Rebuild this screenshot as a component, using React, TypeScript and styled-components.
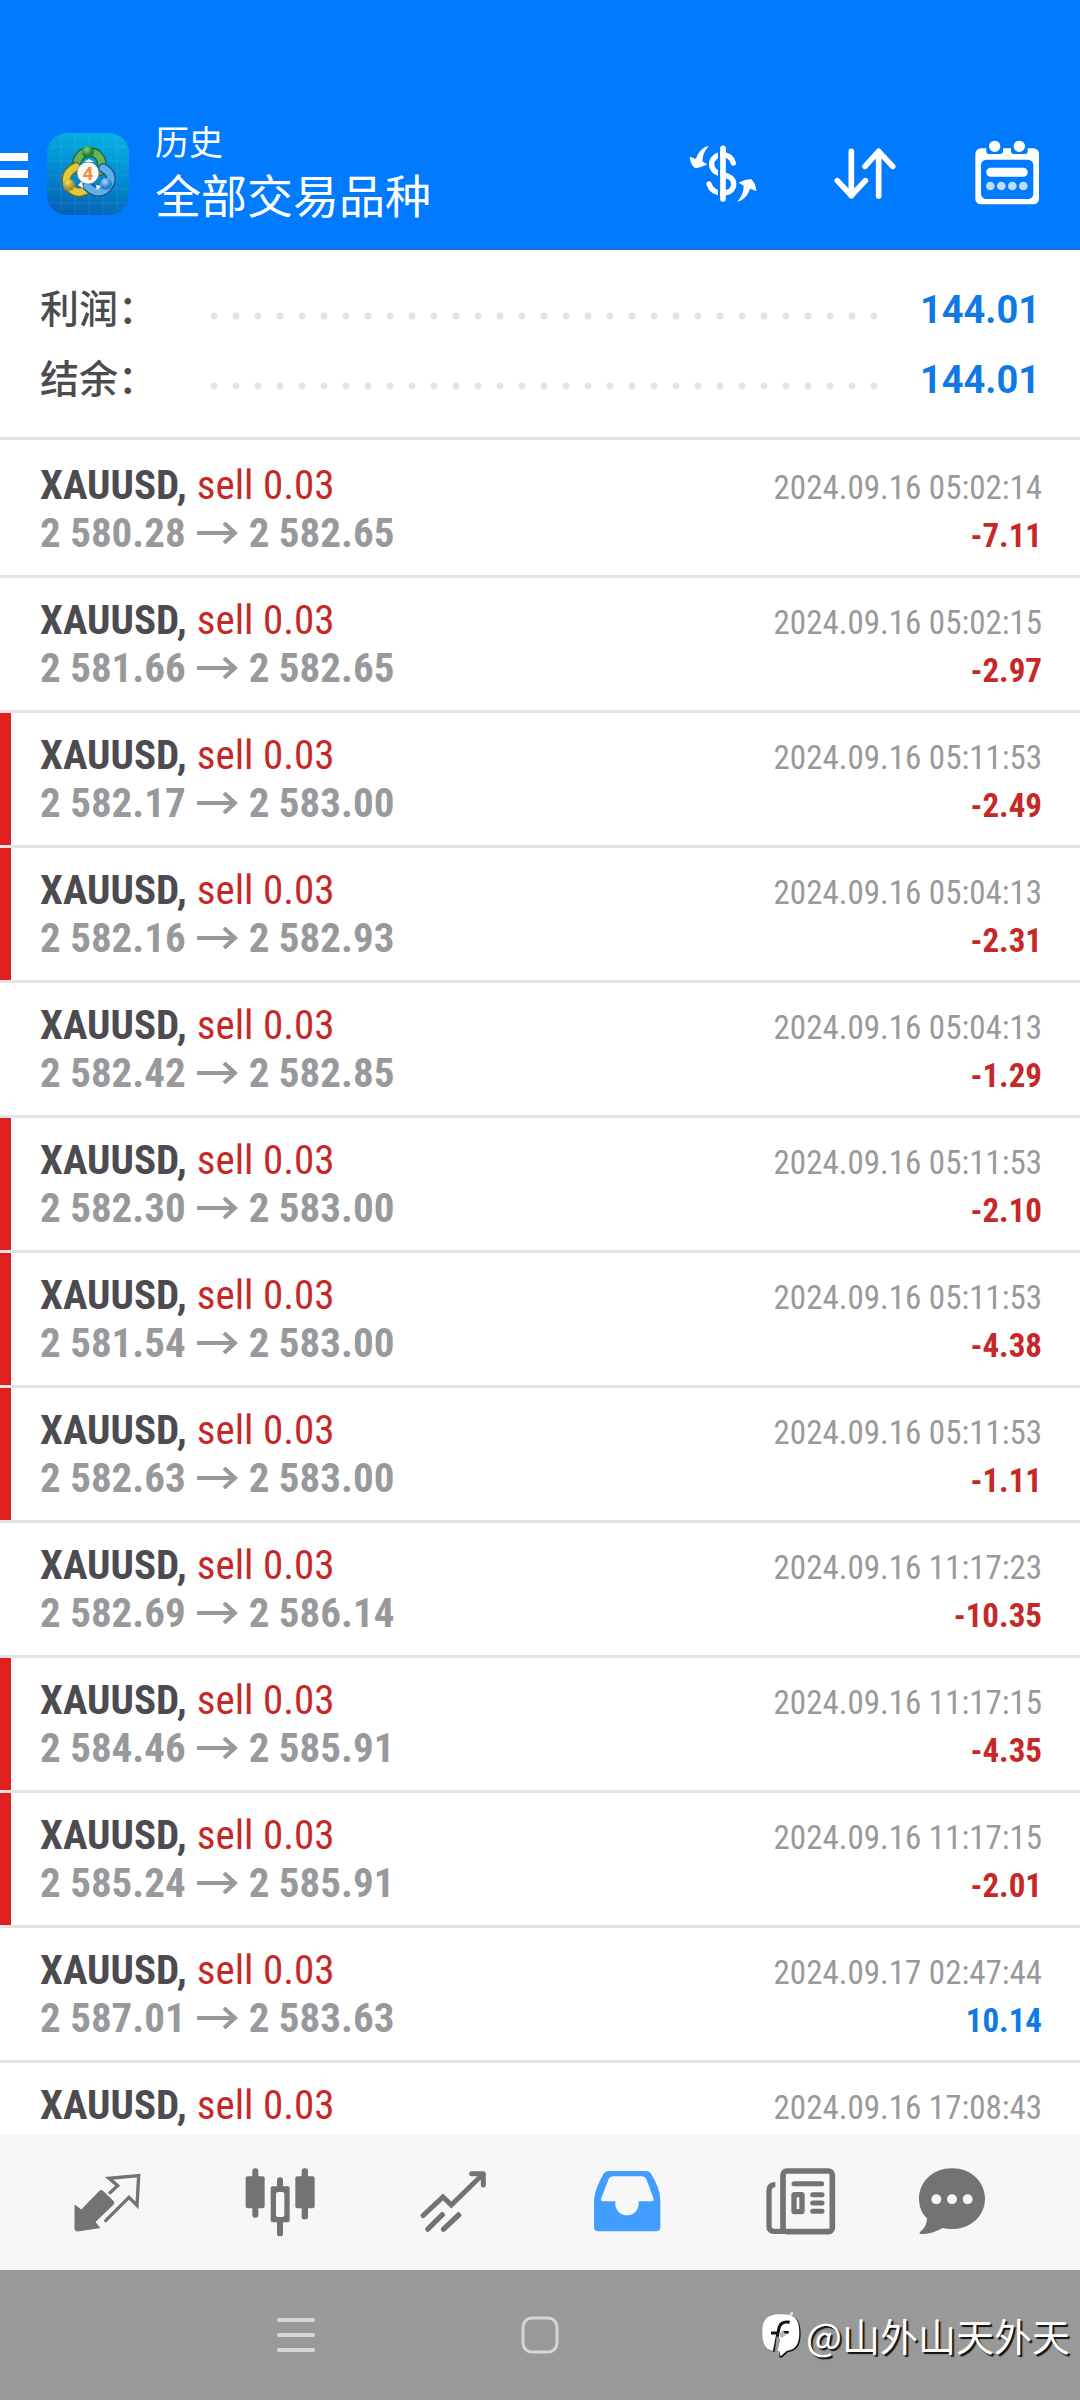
import React from "react";
import styled, { createGlobalStyle } from "styled-components";

const sans = `Roboto, "Noto Sans CJK SC", sans-serif`;
const condensed = `"Roboto Condensed", "Liberation Sans Narrow", Roboto, "Noto Sans CJK SC", sans-serif`;

const color = {
  brand: "#007aff",
  ink: "#4b4b50",
  muted: "#98999b",
  loss: "#c62828",
  gain: "#0f79e6",
  flag: "#e01f1f",
  line: "#e3e3e3",
  icon: "#737373",
  active: "#429dff",
};

const GlobalStyle = createGlobalStyle`
  * { box-sizing: border-box; }
  body { margin: 0; background: #fff; font-family: ${sans}; }
  button { border: 0; padding: 0; background: none; color: inherit; font: inherit; cursor: pointer; }
  svg { display: block; }
`;

const Screen = styled.div`
  display: flex;
  flex-direction: column;
  height: 100vh;
  overflow: hidden;
`;

const Header = styled.header`
  display: flex;
  align-items: center;
  flex: none;
  height: 250px;
  padding: 99px 37px 0 0;
  background: ${color.brand};
  border-bottom: 2px solid #1a6fd0;
  color: #fff;
`;

const MenuButton = styled.button`
  display: flex;
  flex-direction: column;
  gap: 9px;
  width: 28px;
  margin-right: 19px;
`;

const MenuBar = styled.span`
  height: 8px;
  background: #fff;
`;

const Titles = styled.div`
  flex: 1;
  margin-left: 26px;
  padding-bottom: 4px;
`;

const Caption = styled.div`
  font-size: 34px;
  line-height: 50px;
`;

const Title = styled.h1`
  margin: 0;
  font-size: 46px;
  font-weight: 400;
  line-height: 58px;
`;

const Actions = styled.div`
  display: flex;
  gap: 70px;
`;

const Summary = styled.dl`
  flex: none;
  margin: 0;
  padding: 25px 40px 22px;
  border-bottom: 3px solid ${color.line};
`;

const SummaryRow = styled.div`
  display: flex;
  align-items: center;
  height: 70px;
`;

const SummaryLabel = styled.dt`
  width: 163px;
  color: ${color.ink};
  font-size: 39px;
  font-weight: 500;
  line-height: 56px;
`;

const Leader = styled.span`
  flex: 1;
  height: 22px;
  margin: 12px 38px 0 0;
  background: radial-gradient(circle, ${color.line} 3px, transparent 4px) 0 0 / 22px 22px repeat-x;
`;

const SummaryValue = styled.dd`
  margin: 0;
  color: ${color.gain};
  font-size: 38px;
  font-weight: 700;
  line-height: 56px;
`;

const DealList = styled.ul`
  flex: 1;
  min-height: 0;
  margin: 0;
  padding: 3px 0 0;
  overflow: hidden;
  list-style: none;
  font-family: ${condensed};
`;

const Deal = styled.li<{ $flagged?: boolean }>`
  display: grid;
  grid-template-columns: 11px 1fr;
  height: 135px;
  border-bottom: 3px solid ${color.line};

  &::before {
    content: "";
    background: ${(p) => (p.$flagged ? color.flag : "transparent")};
  }
`;

const DealBody = styled.div`
  padding: 18px 38px 0 29px;
`;

const DealLine = styled.div`
  display: flex;
  align-items: baseline;
  justify-content: space-between;
  height: 48px;
  line-height: 48px;
  white-space: nowrap;
`;

const Order = styled.div`
  display: flex;
  gap: 10px;
  font-size: 41px;
`;

const Symbol = styled.span`
  color: ${color.ink};
  font-weight: 700;
`;

const Volume = styled.span`
  color: ${color.loss};
`;

const Prices = styled.div`
  display: flex;
  align-items: center;
  gap: 11px;
  color: ${color.muted};
  font-size: 41px;
  font-weight: 700;
`;

const Time = styled.time`
  color: ${color.muted};
  font-size: 33px;
`;

const Profit = styled.span<{ $gain: boolean }>`
  color: ${(p) => (p.$gain ? color.gain : color.loss)};
  font-size: 33px;
  font-weight: 700;
`;

const TabBar = styled.nav`
  display: grid;
  grid-template-columns: repeat(5, 4fr) 3fr;
  flex: none;
  height: 135px;
  padding: 0 63px 0 20px;
  background: #f7f7f7;
`;

const Tab = styled.button<{ $active?: boolean }>`
  display: flex;
  align-items: center;
  justify-content: center;
  color: ${(p) => (p.$active ? color.active : color.icon)};
`;

const SystemBar = styled.footer`
  position: relative;
  display: grid;
  grid-template-columns: repeat(3, 1fr);
  flex: none;
  height: 130px;
  padding: 0 174px;
  background: #999;
`;

const SystemButton = styled.button`
  display: flex;
  align-items: center;
  justify-content: center;
`;

const Watermark = styled.div`
  position: absolute;
  right: 10px;
  top: 38px;
  display: flex;
  align-items: center;
  gap: 4px;
  color: #fff;
  font-family: "Noto Sans CJK SC", sans-serif;
  font-size: 38px;
  line-height: 54px;
  text-shadow: 2px 2px 1px #111;
  white-space: nowrap;
`;

const AppIcon = () => (
  <svg width="82" height="82" viewBox="0 0 82 82" role="img" aria-label="MetaTrader 4">
    <defs>
      <linearGradient id="bg" x1="0.6" y1="0" x2="0.4" y2="1">
        <stop offset="0" stopColor="#06b0e4" />
        <stop offset="0.5" stopColor="#038cd0" />
        <stop offset="1" stopColor="#0562b4" />
      </linearGradient>
      <radialGradient id="green" cx="0.4" cy="0.3">
        <stop offset="0" stopColor="#8ed36b" />
        <stop offset="1" stopColor="#1f7d36" />
      </radialGradient>
      <radialGradient id="gold" cx="0.4" cy="0.3">
        <stop offset="0" stopColor="#f3e36a" />
        <stop offset="1" stopColor="#a8902a" />
      </radialGradient>
      <radialGradient id="sky" cx="0.4" cy="0.3">
        <stop offset="0" stopColor="#a5dcff" />
        <stop offset="1" stopColor="#2b7fc9" />
      </radialGradient>
    </defs>
    <rect width="82" height="82" rx="20" fill="url(#bg)" />
    <path d="M14 3V79M28 1V81M42 0V82M56 1V81M70 3V79M3 14H79M1 28H81M0 42H82M1 56H81M3 70H79" stroke="#7fd6ff" strokeOpacity="0.14" />
    <g fill="none" strokeLinecap="round">
      <path d="M30 37C28 26 34 19 42 19C51 19 57 26 54 38" stroke="#1d6b3c" strokeWidth="10" />
      <path d="M30 37C28 26 34 19 42 19C51 19 57 26 54 38" stroke="#64b35a" strokeWidth="7" />
      <path d="M29 34C19 39 17 47 22 53C26 60 34 61 41 56" stroke="#6b6a2c" strokeWidth="10" />
      <path d="M29 34C19 39 17 47 22 53C26 60 34 61 41 56" stroke="#dccb3f" strokeWidth="7" />
      <path d="M56 35C64 39 66 46 62 52C57 61 48 61 40 53" stroke="#155a94" strokeWidth="10" />
      <path d="M56 35C64 39 66 46 62 52C57 61 48 61 40 53" stroke="#5fb0e6" strokeWidth="7" />
    </g>
    <path d="M37 29L42 26L47 29ZM31 52L35 48L36 55ZM49 52L55 53L50 57Z" fill="#fff" />
    <circle cx="41" cy="19" r="6" fill="url(#green)" />
    <circle cx="22" cy="52" r="6" fill="url(#gold)" />
    <circle cx="59" cy="51" r="6" fill="url(#sky)" />
    <circle cx="41" cy="40" r="11" fill="#fbfbf6" stroke="#3d5a4a" strokeOpacity="0.5" />
    <text x="41" y="47" textAnchor="middle" fontFamily={sans} fontSize="19" fontWeight="700" fill="#f08a3c">4</text>
  </svg>
);

const CurrencyIcon = () => (
  <svg width="72" height="72" viewBox="78 82 216 216" aria-hidden="true">
    <g fill="none" stroke="#fff" strokeLinecap="round">
      <path d="M217 157C211 138 199 132 184 132C165 132 152 145 152 160C152 181 168 187 186 192C206 197 218 203 218 220C218 236 206 247 186 247C164 247 150 239 144 220" strokeWidth="16" />
      <path d="M174 118V262" stroke={color.brand} strokeWidth="6" strokeLinecap="butt" />
      <path d="M186 113V265" strokeWidth="17" />
    </g>
    <path d="M144 105C124 110 110 125 105 145L86 138C87 153 92 165 103 173C114 172 126 168 139 161L125 153C124 135 130 120 144 105Z" fill="#fff" />
    <path d="M229 273C249 268 261 253 267 234L286 241C285 226 280 214 270 205C258 206 246 209 233 216L248 225C248 243 242 258 229 273Z" fill="#fff" />
  </svg>
);

const SortIcon = () => (
  <svg width="72" height="72" viewBox="507 82 216 216" fill="none" stroke="#fff" strokeWidth="17" strokeLinecap="round" strokeLinejoin="round" aria-hidden="true">
    <path d="M574 122V255M532 210L574 255L616 210" />
    <path d="M656 256V122M615 167L656 122L698 167" />
  </svg>
);

const CalendarIcon = () => (
  <svg width="72" height="72" viewBox="932 82 216 216" fill="#fff" aria-hidden="true">
    <rect x="945" y="113" width="191" height="168" rx="16" />
    <path d="M978 108H1028V122Q1028 130 1020 130H986Q978 130 978 122ZM1052 108H1102V122Q1102 130 1094 130H1060Q1052 130 1052 122Z" fill={color.brand} />
    <rect x="962" y="147" width="157" height="118" rx="16" fill={color.brand} />
    <circle cx="1003" cy="107" r="17" />
    <circle cx="1077" cy="107" r="17" />
    <rect x="978" y="171" width="124" height="27" rx="13" />
    <g fillOpacity="0.75">
      <circle cx="990" cy="226" r="13" />
      <circle cx="1023" cy="226" r="13" />
      <circle cx="1056" cy="226" r="13" />
      <circle cx="1089" cy="226" r="13" />
    </g>
  </svg>
);

const ArrowIcon = () => (
  <svg width="41" height="22" viewBox="0 0 41 22" fill="none" stroke="currentColor" strokeWidth="4" aria-label="to" role="img">
    <path d="M0 11H38M27 1L38 11L27 21" />
  </svg>
);

const QuotesIcon = () => (
  <svg width="72" height="72" viewBox="36 50 216 216" aria-hidden="true">
    <path d="M48 165L67 179L122 122Q127 118 132 123L163 153Q167 158 162 163L108 215L122 232L56 242Q48 243 48 235Z" fill="currentColor" stroke="currentColor" strokeWidth="3" strokeLinejoin="round" />
    <path d="M153 127L176 106L150 84L239 76L234 165L210 141L140 211" fill="none" stroke="currentColor" strokeWidth="10" strokeLinejoin="miter" strokeLinecap="round" />
  </svg>
);

const CandlesIcon = () => (
  <svg width="72" height="72" viewBox="555 50 216 216" fill="currentColor" aria-hidden="true">
    <rect x="580" y="54" width="18" height="148" rx="8" />
    <rect x="560" y="78" width="57" height="96" rx="6" />
    <rect x="728" y="54" width="19" height="153" rx="8" />
    <rect x="709" y="78" width="58" height="96" rx="6" />
    <rect x="654" y="81" width="18" height="30" rx="8" />
    <rect x="654" y="205" width="18" height="53" rx="8" />
    <path fillRule="evenodd" d="M641 108H686Q692 108 692 114V210Q692 216 686 216H641Q635 216 635 210V114Q635 108 641 108ZM657 125Q651 125 651 131V194Q651 200 657 200H670Q676 200 676 194V131Q676 125 670 125Z" />
  </svg>
);

const TradeIcon = () => (
  <svg width="72" height="72" viewBox="1074 50 216 216" fill="none" stroke="currentColor" strokeWidth="15" strokeLinecap="round" aria-hidden="true">
    <path d="M1092 196L1152 140L1177 164L1270 73" />
    <path d="M1238 70H1273V104" strokeLinejoin="round" />
    <path d="M1106 237L1154 189M1153 237L1203 190" strokeLinecap="butt" />
    <path d="M1106 237L1150 193M1153 237L1199 194" />
  </svg>
);

const HistoryIcon = () => (
  <svg width="72" height="72" viewBox="34 50 216 216" fill="currentColor" aria-hidden="true">
    <path fillRule="evenodd" d="M88 62H198Q209 62 215 72Q242 116 242 150V230Q242 243 229 243H57Q43 243 43 230V150Q45 116 71 72Q77 62 88 62ZM100 78Q91 78 87 86L65 143Q61 153 71 153H107V160A35 35 0 0 0 177 160V153H214Q224 153 221 143L200 86Q196 78 187 78Z" />
  </svg>
);

const NewsIcon = () => (
  <svg width="72" height="72" viewBox="553 50 216 216" fill="none" stroke="currentColor" aria-hidden="true">
    <rect x="610" y="62" width="148" height="182" rx="12" strokeWidth="17" />
    <path d="M587 103Q568 103 568 122V228Q568 243 584 243H612" strokeWidth="16" />
    <path d="M643 100H726M699 133H727M699 158H727M699 183H727" strokeWidth="15" strokeLinecap="round" />
    <rect x="643" y="133" width="24" height="51" rx="2" strokeWidth="16" />
  </svg>
);

const ChatIcon = () => (
  <svg width="72" height="72" viewBox="1011 50 216 216" fill="currentColor" aria-hidden="true">
    <path fillRule="evenodd" d="M1119 54C1175 54 1218 94 1218 145C1218 197 1175 236 1119 236C1109 236 1099 235 1090 233C1074 243 1050 252 1026 251Q1018 250 1024 244C1038 234 1043 220 1044 204C1028 189 1020 168 1020 145C1020 94 1063 54 1119 54ZM1072 132A15 15 0 1 0 1072 162A15 15 0 1 0 1072 132ZM1119 132A15 15 0 1 0 1119 162A15 15 0 1 0 1119 132ZM1166 132A15 15 0 1 0 1166 162A15 15 0 1 0 1166 132Z" />
  </svg>
);

const RecentsIcon = () => (
  <svg width="38" height="38" viewBox="0 0 38 38" fill="none" stroke="#d6d6d6" strokeWidth="4" strokeLinecap="round" aria-hidden="true">
    <path d="M2 4H36M2 19H36M2 34H36" />
  </svg>
);

const HomeIcon = () => (
  <svg width="38" height="38" viewBox="0 0 38 38" fill="none" stroke="#d6d6d6" strokeWidth="3" aria-hidden="true">
    <rect x="2" y="2" width="34" height="34" rx="9" />
  </svg>
);

const FollowmeIcon = () => (
  <svg width="40" height="48" viewBox="66 66 120 144" aria-hidden="true">
    <path d="M128 79C167 79 182 92 182 133C182 172 170 186 143 190L126 206L118 205L121 150L111 150L104 188C78 186 69 170 69 133C69 92 84 79 128 79Z" fill="#111" />
    <path d="M123 76C164 76 178 90 178 130C178 168 166 183 140 186L122 202L118 186H98C76 182 67 166 67 130C67 90 82 76 123 76Z" fill="#fff" />
    <path d="M149 100C128 96 118 106 116 122L103 187M93 132H112" fill="none" stroke="#111" strokeWidth="9" />
    <path d="M110 142L104 188H112L121 150Z" fill="#999" />
    <path d="M126 130H146" stroke="#111" strokeWidth="8" />
    <path d="M116 136L128 124L138 138L124 148Z" fill="#bbb" />
    <path d="M146 78L154 68L160 70L156 82Z" fill="#ddd" />
  </svg>
);

interface DealData {
  open?: string;
  close?: string;
  time: string;
  profit?: string;
  flagged?: boolean;
}

const deals: DealData[] = [
  { open: "2 580.28", close: "2 582.65", time: "2024.09.16 05:02:14", profit: "-7.11" },
  { open: "2 581.66", close: "2 582.65", time: "2024.09.16 05:02:15", profit: "-2.97" },
  { open: "2 582.17", close: "2 583.00", time: "2024.09.16 05:11:53", profit: "-2.49", flagged: true },
  { open: "2 582.16", close: "2 582.93", time: "2024.09.16 05:04:13", profit: "-2.31", flagged: true },
  { open: "2 582.42", close: "2 582.85", time: "2024.09.16 05:04:13", profit: "-1.29" },
  { open: "2 582.30", close: "2 583.00", time: "2024.09.16 05:11:53", profit: "-2.10", flagged: true },
  { open: "2 581.54", close: "2 583.00", time: "2024.09.16 05:11:53", profit: "-4.38", flagged: true },
  { open: "2 582.63", close: "2 583.00", time: "2024.09.16 05:11:53", profit: "-1.11", flagged: true },
  { open: "2 582.69", close: "2 586.14", time: "2024.09.16 11:17:23", profit: "-10.35" },
  { open: "2 584.46", close: "2 585.91", time: "2024.09.16 11:17:15", profit: "-4.35", flagged: true },
  { open: "2 585.24", close: "2 585.91", time: "2024.09.16 11:17:15", profit: "-2.01", flagged: true },
  { open: "2 587.01", close: "2 583.63", time: "2024.09.17 02:47:44", profit: "10.14" },
  { time: "2024.09.16 17:08:43" },
];

const totals = [
  { label: "利润：", value: "144.01" },
  { label: "结余：", value: "144.01" },
];

const tabs = [
  { name: "行情", Icon: QuotesIcon },
  { name: "图表", Icon: CandlesIcon },
  { name: "交易", Icon: TradeIcon },
  { name: "历史", Icon: HistoryIcon, active: true },
  { name: "新闻", Icon: NewsIcon },
  { name: "消息", Icon: ChatIcon },
];

export default function App() {
  return (
    <Screen lang="zh-CN">
      <GlobalStyle />
      <Header>
        <MenuButton aria-label="菜单">
          <MenuBar />
          <MenuBar />
          <MenuBar />
        </MenuButton>
        <AppIcon />
        <Titles>
          <Caption>历史</Caption>
          <Title>全部交易品种</Title>
        </Titles>
        <Actions>
          <button aria-label="交易品种"><CurrencyIcon /></button>
          <button aria-label="排序"><SortIcon /></button>
          <button aria-label="日期"><CalendarIcon /></button>
        </Actions>
      </Header>

      <Summary>
        {totals.map((t) => (
          <SummaryRow key={t.label}>
            <SummaryLabel>{t.label}</SummaryLabel>
            <Leader />
            <SummaryValue>{t.value}</SummaryValue>
          </SummaryRow>
        ))}
      </Summary>

      <DealList>
        {deals.map((d, i) => (
          <Deal key={i} $flagged={d.flagged}>
            <DealBody>
              <DealLine>
                <Order>
                  <Symbol>XAUUSD,</Symbol>
                  <Volume>sell 0.03</Volume>
                </Order>
                <Time>{d.time}</Time>
              </DealLine>
              {d.profit && (
                <DealLine>
                  <Prices>
                    <span>{d.open}</span>
                    <ArrowIcon />
                    <span>{d.close}</span>
                  </Prices>
                  <Profit $gain={!d.profit.startsWith("-")}>{d.profit}</Profit>
                </DealLine>
              )}
            </DealBody>
          </Deal>
        ))}
      </DealList>

      <TabBar>
        {tabs.map(({ name, Icon, active }) => (
          <Tab key={name} $active={active} aria-label={name}>
            <Icon />
          </Tab>
        ))}
      </TabBar>

      <SystemBar>
        <SystemButton aria-label="最近任务"><RecentsIcon /></SystemButton>
        <SystemButton aria-label="主屏幕"><HomeIcon /></SystemButton>
        <Watermark>
          <FollowmeIcon />
          <span>@山外山天外天</span>
        </Watermark>
      </SystemBar>
    </Screen>
  );
}
